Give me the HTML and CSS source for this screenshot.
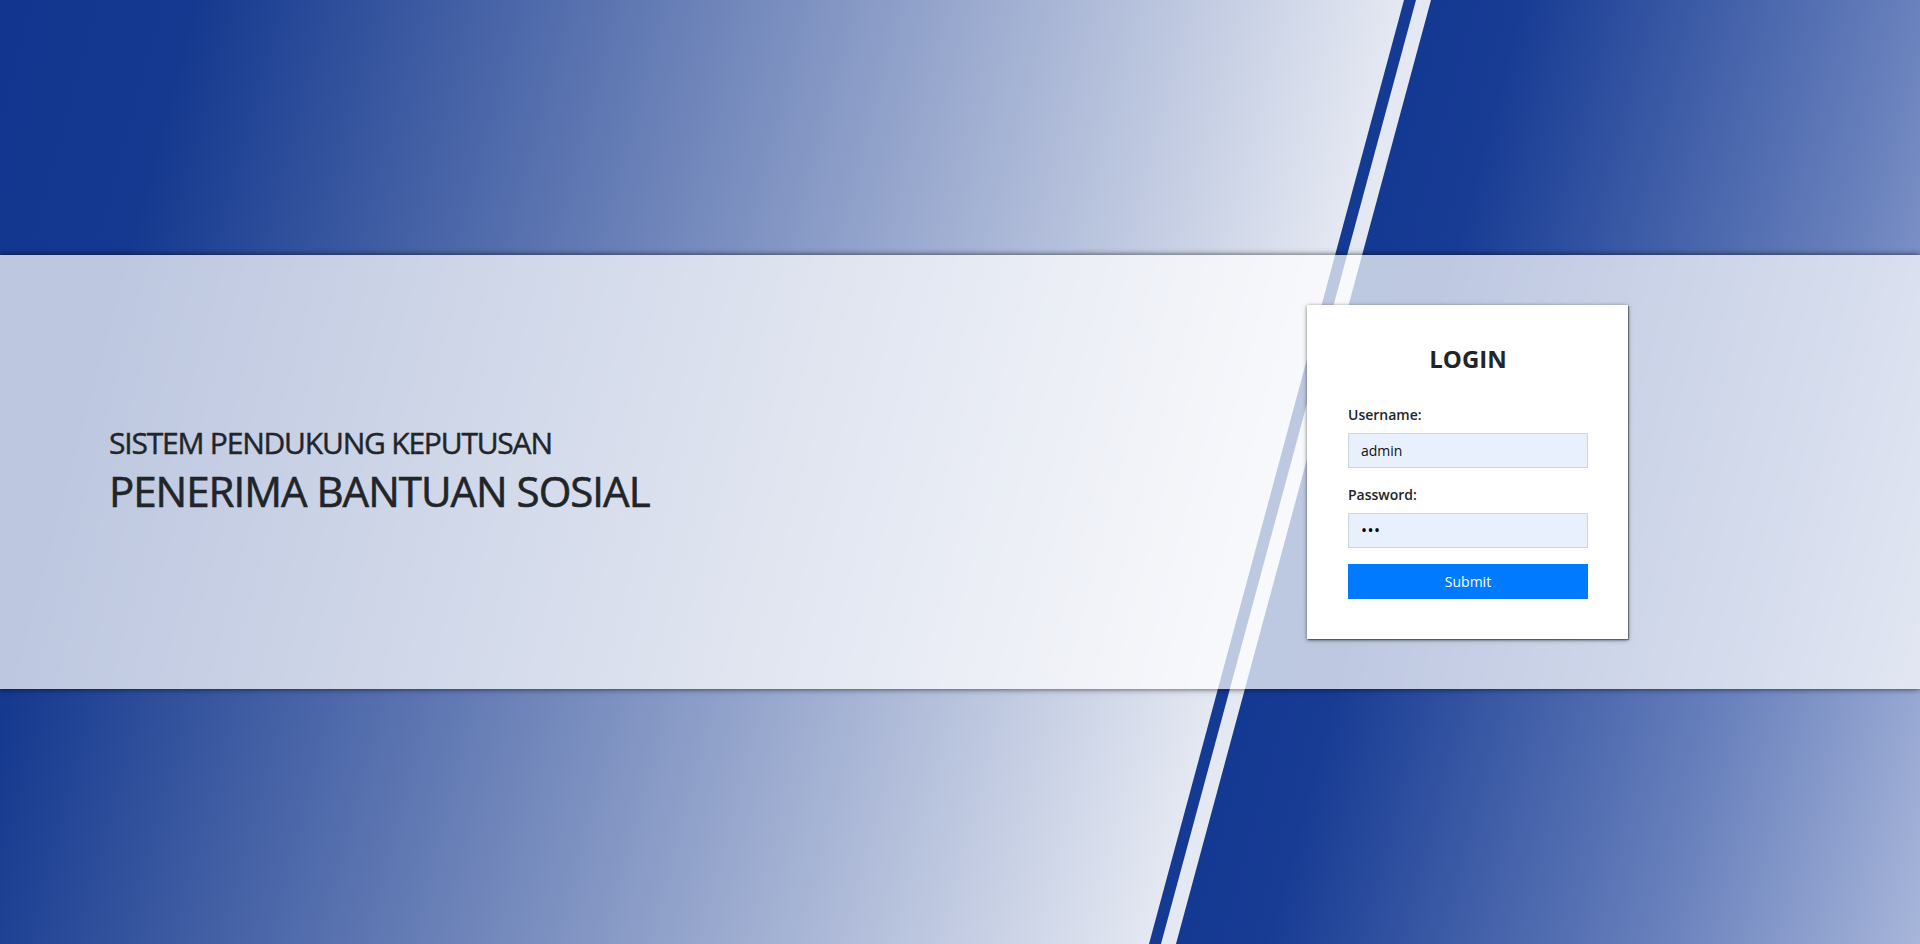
FILE: index.html
```html
<!DOCTYPE html>
<html lang="id">
<head>
<meta charset="utf-8">
<title>Login - SPK Penerima Bantuan Sosial</title>
<link rel="stylesheet" href="styles.css">
</head>
<body>
<svg class="backdrop" viewBox="0 0 1920 944" preserveAspectRatio="none" aria-hidden="true">
  <defs>
    <linearGradient id="gLeft" gradientUnits="userSpaceOnUse" x1="0" y1="0" x2="2027.4" y2="547.4">
      <stop offset="0" stop-color="#12368f"/>
      <stop offset="0.09" stop-color="#15398f"/>
      <stop offset="0.6455" stop-color="#e4e8f2"/>
      <stop offset="1" stop-color="#e8ecf5"/>
    </linearGradient>
    <linearGradient id="gRight" gradientUnits="userSpaceOnUse" x1="0" y1="0" x2="2027.4" y2="547.4">
      <stop offset="0.658" stop-color="#143992"/>
      <stop offset="0.70" stop-color="#183c94"/>
      <stop offset="0.883" stop-color="#6a82bd"/>
      <stop offset="1" stop-color="#a8b6da"/>
    </linearGradient>
  </defs>
  <rect x="0" y="0" width="1920" height="944" fill="url(#gLeft)"/>
  <polygon points="1404,0 1416,0 1161,944 1149,944" fill="#153a93"/>
  <polygon points="1431,0 1920,0 1920,944 1176,944" fill="url(#gRight)"/>
</svg>

<main class="page">
  <section class="band">
    <div class="headline">
      <h3 class="headline-sub">SISTEM PENDUKUNG KEPUTUSAN</h3>
      <h1 class="headline-main">PENERIMA BANTUAN SOSIAL</h1>
    </div>

    <form class="login-card" onsubmit="return false;">
      <h4 class="login-title">LOGIN</h4>
      <div class="field">
        <label class="field-label" for="username">Username:</label>
        <input class="field-input" id="username" type="text" value="admin">
      </div>
      <div class="field">
        <label class="field-label" for="password">Password:</label>
        <input class="field-input field-secret" id="password" type="password" value="123">
      </div>
      <button class="submit-btn" type="submit">Submit</button>
    </form>
  </section>
</main>
</body>
</html>
```

FILE: styles.css
```css
* {
  box-sizing: border-box;
}

html, body {
  margin: 0;
  padding: 0;
  height: 100%;
}

body {
  font-family: "Open Sans", "Noto Sans", "Liberation Sans", sans-serif;
  color: #212529;
  overflow: hidden;
  position: relative;
}

.backdrop {
  position: absolute;
  left: 0;
  top: 0;
  width: 100%;
  height: 100%;
  display: block;
  z-index: 0;
}

.page {
  position: relative;
  z-index: 1;
  height: 100vh;
  display: flex;
  align-items: center;
}

.band {
  width: 100%;
  height: 46vh;
  background: rgba(255, 255, 255, 0.72);
  box-shadow: 0 0 6px rgba(0, 0, 0, 0.7);
  display: flex;
  align-items: center;
  justify-content: space-between;
  padding: 0 292px 0 109px;
}

.headline {
  display: flex;
  flex-direction: column;
  gap: 5px;
  margin-bottom: 3px;
}

.headline-sub {
  margin: 0;
  font-size: 30px;
  font-weight: 400;
  letter-spacing: -1.2px;
  line-height: 1.2;
  -webkit-text-stroke: 0.45px #212529;
}

.headline-main {
  margin: 0;
  font-size: 42px;
  font-weight: 400;
  letter-spacing: -1px;
  line-height: 1.2;
  -webkit-text-stroke: 0.6px #212529;
}

.login-card {
  width: 321px;
  background: #fff;
  padding: 40px 40px 40px 41px;
  box-shadow: 0 1px 4px rgba(0, 0, 0, 0.55), 1px 1px 1px rgba(0, 0, 0, 0.35);
  display: flex;
  flex-direction: column;
}

.login-title {
  margin: 0 0 30px;
  text-align: center;
  font-size: 24px;
  font-weight: 700;
  line-height: 1.2;
}

.field {
  display: flex;
  flex-direction: column;
  margin-bottom: 16px;
}

.field-label {
  font-size: 14px;
  font-weight: 600;
  line-height: 21px;
  margin-bottom: 8px;
}

.field-input {
  height: 35px;
  width: 100%;
  border: 1px solid #cfd4dc;
  background: #e8f0fe;
  padding: 0 12px;
  font-family: inherit;
  font-size: 14px;
  color: #111;
  outline: none;
}

.field-secret {
  font-size: 16px;
  letter-spacing: 0.5px;
  color: #000;
}

.submit-btn {
  height: 35px;
  width: 100%;
  border: none;
  background: #007bff;
  color: #fff;
  font-family: inherit;
  font-size: 14px;
  cursor: pointer;
}
```
